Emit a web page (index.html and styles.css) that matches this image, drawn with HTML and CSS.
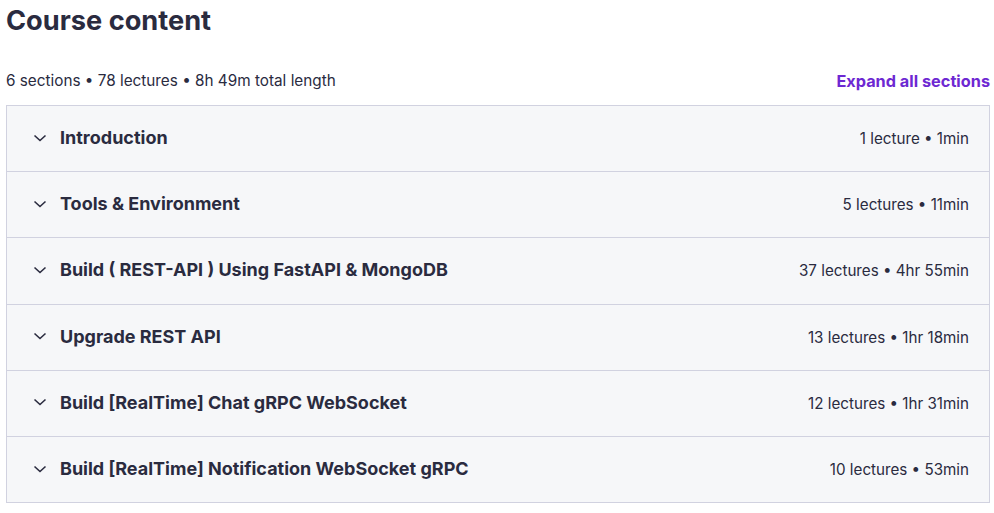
FILE: index.html
```html
<!DOCTYPE html>
<html lang="en">
<head>
<meta charset="UTF-8">
<title>Course content</title>
<link rel="stylesheet" href="styles.css">
</head>
<body>

<div class="curriculum">
  <h2 class="title">Course content</h2>

  <div class="summary">
    <span>6 sections • 78 lectures • 8h 49m total length</span>
    <button class="expand-all" type="button">Expand all sections</button>
  </div>

  <div class="sections">
    <div class="section">
      <svg class="chevron" viewBox="0 0 14 8"><path d="M1.5 1.5l5.5 5 5.5-5"/></svg>
      <span class="section-title">Introduction</span>
      <span class="section-meta">1 lecture • 1min</span>
    </div>
    <div class="section">
      <svg class="chevron" viewBox="0 0 14 8"><path d="M1.5 1.5l5.5 5 5.5-5"/></svg>
      <span class="section-title">Tools &amp; Environment</span>
      <span class="section-meta">5 lectures • 11min</span>
    </div>
    <div class="section">
      <svg class="chevron" viewBox="0 0 14 8"><path d="M1.5 1.5l5.5 5 5.5-5"/></svg>
      <span class="section-title">Build ( REST-API ) Using FastAPI &amp; MongoDB</span>
      <span class="section-meta">37 lectures • 4hr 55min</span>
    </div>
    <div class="section">
      <svg class="chevron" viewBox="0 0 14 8"><path d="M1.5 1.5l5.5 5 5.5-5"/></svg>
      <span class="section-title">Upgrade REST API</span>
      <span class="section-meta">13 lectures • 1hr 18min</span>
    </div>
    <div class="section">
      <svg class="chevron" viewBox="0 0 14 8"><path d="M1.5 1.5l5.5 5 5.5-5"/></svg>
      <span class="section-title">Build [RealTime] Chat gRPC WebSocket</span>
      <span class="section-meta">12 lectures • 1hr 31min</span>
    </div>
    <div class="section">
      <svg class="chevron" viewBox="0 0 14 8"><path d="M1.5 1.5l5.5 5 5.5-5"/></svg>
      <span class="section-title">Build [RealTime] Notification WebSocket gRPC</span>
      <span class="section-meta">10 lectures • 53min</span>
    </div>
  </div>
</div>

</body>
</html>
```

FILE: styles.css
```css
body {
  font-family: Inter, "Noto Sans", sans-serif;
  margin: 0;
  padding: 0;
  background: #fff;
  color: #2a2b3f;
}

.curriculum {
  width: 984px;
  margin-left: 6px;
}

.title {
  font-size: 27.2px;
  font-weight: 700;
  margin: 0;
  padding-top: 5px;
  line-height: 32px;
}

.summary {
  display: flex;
  justify-content: space-between;
  align-items: center;
  margin-top: 30px;
  height: 26px;
  margin-bottom: 12px;
  font-size: 15.3px;
}

.expand-all {
  background: none;
  border: none;
  padding: 0;
  font: inherit;
  font-size: 16.3px;
  font-weight: 700;
  color: #6d28d2;
  cursor: pointer;
  position: relative;
  top: 1px;
}

.sections {
  border: 1px solid #d1d2e0;
}

.section {
  display: flex;
  align-items: center;
  height: 65.2px;
  padding: 0 20px 0 26px;
  background: #f6f7f9;
  border-bottom: 1px solid #d1d2e0;
}

.section:last-child {
  border-bottom: none;
}

.chevron {
  width: 14px;
  height: 8px;
  fill: none;
  stroke: #2a2b3f;
  stroke-width: 1.6;
  margin-right: 13px;
  margin-top: -2px;
  flex-shrink: 0;
}

.section-title {
  flex: 1;
  font-size: 18px;
  font-weight: 700;
  position: relative;
  top: -1px;
}

.section-meta {
  font-size: 15.2px;
}
```
